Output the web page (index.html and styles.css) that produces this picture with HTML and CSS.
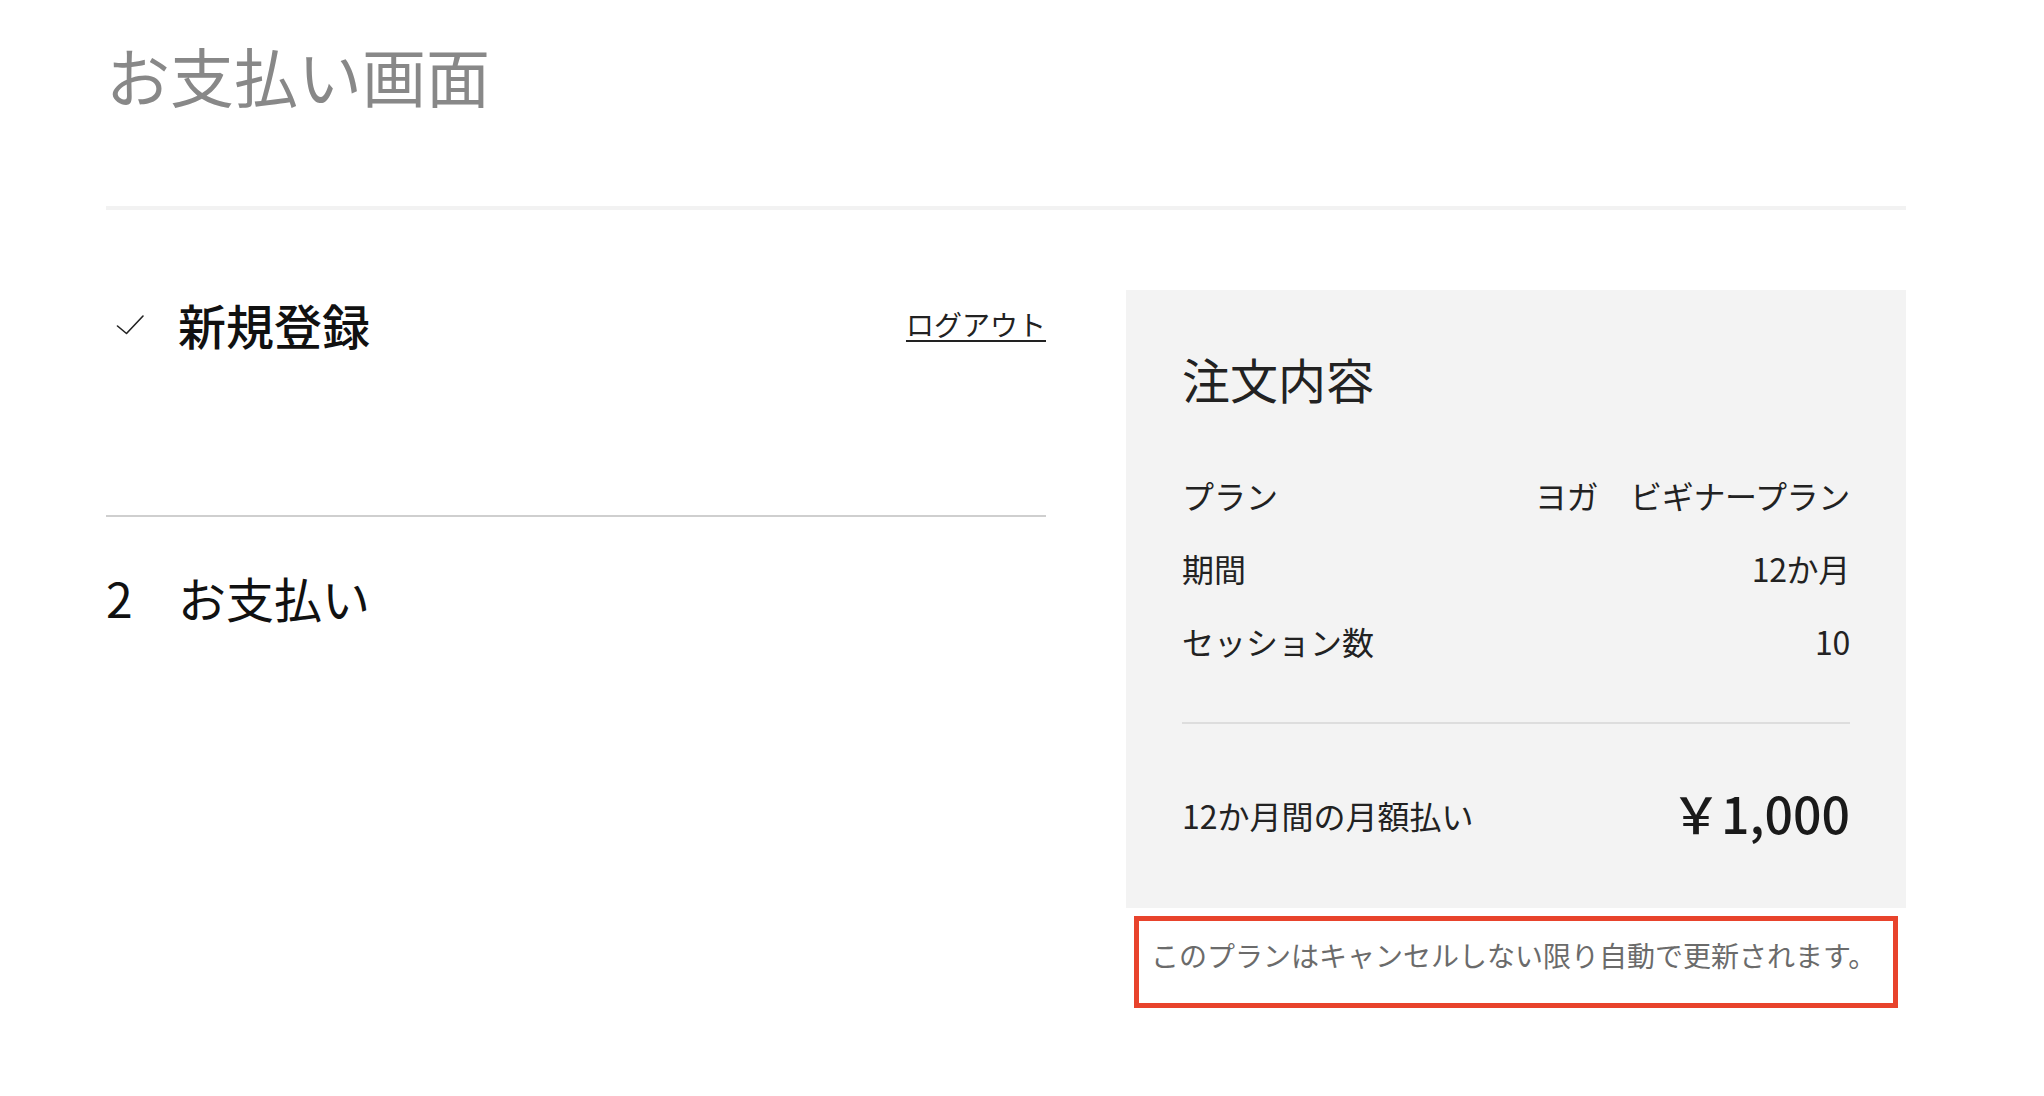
FILE: index.html
```html
<!DOCTYPE html>
<html lang="ja">
<head>
<meta charset="utf-8">
<title>お支払い画面</title>
<link rel="stylesheet" href="styles.css">
</head>
<body>
<div class="page">
  <header class="page-header">
    <h1 class="page-title">お支払い画面</h1>
  </header>
  <main class="checkout">
    <section class="steps">
      <div class="step step-done">
        <div class="step-row">
          <span class="step-mark">
            <svg class="check" width="28" height="22" viewBox="0 0 28 22" aria-hidden="true">
              <polyline points="1.5,12 10.5,19.5 27,2" fill="none" stroke="#222" stroke-width="1.6" stroke-linecap="round" stroke-linejoin="round"/>
            </svg>
          </span>
          <h2 class="step-title step-title-strong">新規登録</h2>
          <a class="logout" href="#">ログアウト</a>
        </div>
      </div>
      <div class="step step-current">
        <div class="step-row">
          <span class="step-mark step-num">2</span>
          <h2 class="step-title">お支払い</h2>
        </div>
      </div>
    </section>
    <aside class="summary-col">
      <div class="summary">
        <h2 class="summary-title">注文内容</h2>
        <dl class="summary-list">
          <div class="summary-row"><dt>プラン</dt><dd>ヨガ　ビギナープラン</dd></div>
          <div class="summary-row"><dt>期間</dt><dd>12か月</dd></div>
          <div class="summary-row"><dt>セッション数</dt><dd>10</dd></div>
        </dl>
        <div class="summary-total">
          <span class="total-label">12か月間の月額払い</span>
          <span class="total-price">￥1,000</span>
        </div>
      </div>
      <p class="note">このプランはキャンセルしない限り自動で更新されます。</p>
    </aside>
  </main>
</div>
</body>
</html>
```

FILE: styles.css
```css
* {
  box-sizing: border-box;
}

html, body {
  margin: 0;
  padding: 0;
  background: #ffffff;
}

body {
  font-family: "Noto Sans CJK JP", "Noto Sans", "Liberation Sans", sans-serif;
  color: #222222;
}

.page {
  width: 1800px;
  margin-left: 106px;
}

.page-header {
  padding-top: 42px;
  padding-bottom: 100px;
  border-bottom: 4px solid #f2f2f2;
}

.page-title {
  margin: 0;
  font-size: 64px;
  line-height: 64px;
  font-weight: 400;
  color: #888888;
  letter-spacing: 0;
}

.checkout {
  display: grid;
  grid-template-columns: 940px 780px;
  column-gap: 80px;
  align-items: start;
  margin-top: 80px;
}

/* left column */
.steps {
  padding-top: 10px;
}

.step-done {
  padding-bottom: 167px;
  border-bottom: 2px solid #cfcfcf;
}

.step-current {
  padding-top: 56px;
}

.step-row {
  display: flex;
  align-items: center;
  height: 48px;
}

.step-mark {
  width: 72px;
  flex: 0 0 72px;
  display: flex;
  align-items: center;
}

.check {
  margin-left: 10px;
  margin-top: 2px;
}

.step-num {
  font-size: 48px;
  line-height: 48px;
  color: #111111;
}

.step-title {
  margin: 0;
  font-size: 48px;
  line-height: 48px;
  font-weight: 400;
  color: #111111;
}

.step-title-strong {
  font-weight: 500;
}

.logout {
  margin-left: auto;
  font-size: 28px;
  line-height: 28px;
  color: #222222;
  text-decoration: underline;
  text-underline-offset: 4px;
  text-decoration-thickness: 2px;
}

/* right column */
.summary {
  background: #f3f3f3;
  padding: 64px 56px 0 56px;
}

.summary-title {
  margin: 0;
  font-size: 48px;
  line-height: 48px;
  font-weight: 400;
  color: #222222;
}

.summary-list {
  margin: 77px 0 0 0;
  padding-bottom: 65px;
  border-bottom: 2px solid #dddddd;
  display: flex;
  flex-direction: column;
  gap: 41px;
}

.summary-row {
  display: flex;
  justify-content: space-between;
  font-size: 32px;
  line-height: 32px;
}

.summary-row dt,
.summary-row dd {
  margin: 0;
}

.summary-row dd {
  letter-spacing: -0.3px;
}

.summary-total {
  display: flex;
  justify-content: space-between;
  align-items: center;
  padding: 64px 0 72px 0;
  height: 184px;
}

.total-label {
  font-size: 32px;
  line-height: 32px;
  margin-top: 6px;
}

.total-price {
  font-size: 50px;
  line-height: 48px;
  font-weight: 500;
  color: #1a1a1a;
}

.note {
  margin: 8px 8px 0 8px;
  border: 5px solid #e8432c;
  padding: 20px 12px 34px 12px;
  font-size: 28px;
  line-height: 28px;
  color: #6b6b6b;
  white-space: nowrap;
}
```
